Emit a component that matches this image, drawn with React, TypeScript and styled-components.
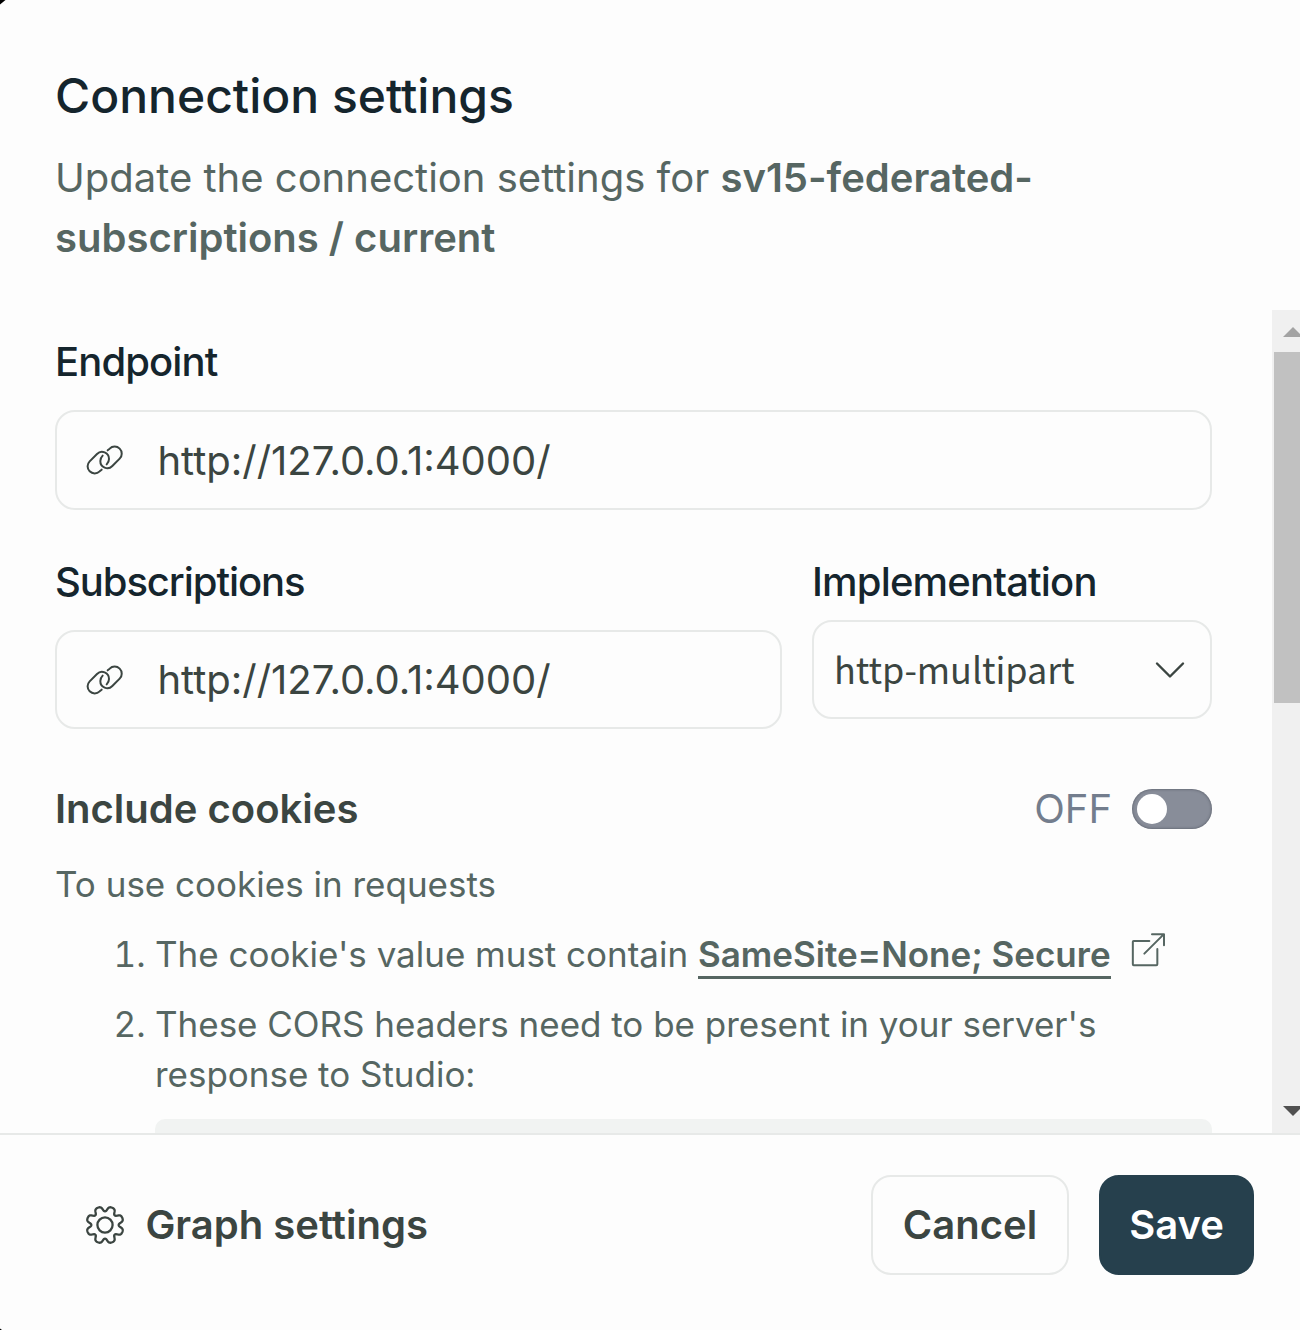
import React from "react";
import styled, { createGlobalStyle } from "styled-components";

const GlobalStyle = createGlobalStyle`
  *, *::before, *::after { box-sizing: border-box; }
  body { margin: 0; background: #000; }
`;

const ink = "#15252d";
const body = "#3b4541";
const muted = "#566662";
const line = "#e7e9e8";

const Dialog = styled.main`
  display: flex;
  flex-direction: column;
  width: 1300px;
  height: 1330px;
  overflow: hidden;
  background: #fdfdfd;
  clip-path: polygon(5.5px 0, 100% 0, 100% 100%, 2px 100%, 0 calc(100% - 1.5px), 0 4.5px);
  font-family: Inter, "Liberation Sans", sans-serif;
  font-size: 40px;
  color: ${body};
`;

const Header = styled.header`
  flex: none;
  height: 310px;
  padding: 66px 55px 0;
`;

const Title = styled.h1`
  margin: 0;
  font-size: 48px;
  font-weight: 500;
  line-height: 60px;
  color: ${ink};
`;

const Subtitle = styled.p`
  margin: 22px 0 0;
  line-height: 60px;
  color: ${muted};
`;

const Strong = styled.strong`
  font-weight: 600;
`;

const Middle = styled.div`
  display: flex;
  flex: none;
  height: 823px;
  overflow: hidden;
`;

const Content = styled.div`
  flex: 1;
  padding: 22px 60px 0 55px;
`;

const Scrollbar = styled.div`
  display: flex;
  flex-direction: column;
  justify-content: space-between;
  width: 28px;
  height: 823px;
  overflow: hidden;
  background: #f0f0f0;
`;

const ScrollTop = styled.div`
  padding-top: 17px;
`;

const ScrollArrow = styled.svg`
  display: block;
  width: 20px;
  height: 10px;
  margin-left: 11px;
`;

const ScrollThumb = styled.div`
  height: 351px;
  margin: 15px 0 0 2px;
  background: #c1c1c1;
`;

const ScrollBottom = styled.div`
  padding-bottom: 17px;
`;

const FieldRow = styled.div`
  display: grid;
  grid-template-columns: 727px 400px;
  gap: 30px;
  margin-top: 42px;
`;

const Label = styled.label<{ $tracking: number }>`
  display: block;
  height: 60px;
  line-height: 60px;
  font-weight: 500;
  letter-spacing: ${(p) => p.$tracking}px;
  color: ${ink};
`;

const InputBox = styled.div<{ $height: number }>`
  display: flex;
  align-items: center;
  gap: 33.4px;
  height: ${(p) => p.$height}px;
  margin-top: 18px;
  padding: 0 28px 0 29px;
  border: 2px solid ${line};
  border-radius: 20px;
`;

const SelectBox = styled.div`
  display: flex;
  align-items: center;
  justify-content: space-between;
  height: 99px;
  margin-top: 8px;
  padding: 0 25px 0 20px;
  border: 2px solid ${line};
  border-radius: 20px;
`;

const SelectValue = styled.span`
  padding-bottom: 4px;
  font-family: "Noto Sans CJK SC", "Noto Sans", sans-serif;
  font-size: 36px;
  line-height: 50px;
  letter-spacing: -0.08px;
`;

const Icon = styled.svg<{ $w: number; $h: number }>`
  flex: none;
  display: block;
  width: ${(p) => p.$w}px;
  height: ${(p) => p.$h}px;
  fill: none;
  stroke: currentColor;
  stroke-linecap: round;
  stroke-linejoin: round;
  overflow: visible;
`;

const CookieRow = styled.div`
  display: flex;
  align-items: center;
  height: 40px;
  margin-top: 60px;
`;

const CookieTitle = styled.h2`
  flex: 1;
  margin: 0;
  padding-bottom: 2px;
  font-size: 40px;
  font-weight: 600;
`;

const ToggleState = styled.span`
  margin-right: 20px;
  padding-bottom: 2px;
  color: #737d8d;
`;

const Toggle = styled.span`
  display: flex;
  align-items: center;
  width: 80px;
  height: 40px;
  padding-left: 5px;
  border-radius: 20px;
  background: #888d99;
  box-shadow: inset 0 0 3px rgba(30, 35, 45, 0.55);
`;

const Knob = styled.span`
  width: 30px;
  height: 30px;
  border-radius: 50%;
  background: #fff;
`;

const Help = styled.div`
  margin-top: 30px;
  font-size: 35px;
  line-height: 50px;
  color: ${muted};
`;

const Steps = styled.ol`
  margin: 20px 0 0;
  padding-left: 100px;
`;

const Step = styled.li`
  margin-bottom: 20px;
`;

const StepLine = styled.div`
  display: flex;
  align-items: flex-start;
  height: 50px;
  white-space: pre;
`;

const StepText = styled.span`
  letter-spacing: -0.02px;
`;

const DocLink = styled.a`
  height: 50px;
  font-weight: 600;
  border-bottom: 3px solid ${muted};
`;

const ExternalSlot = styled.span`
  margin: 4px 0 0 20px;
`;

const CodeBlock = styled.div`
  height: 200px;
  margin-top: 20px;
  border-radius: 10px;
  background: #f1f3f2;
`;

const Footer = styled.footer`
  display: flex;
  flex: 1;
  align-items: flex-start;
  justify-content: space-between;
  padding: 40px 46px 0 85px;
  border-top: 2px solid ${line};
  font-weight: 600;
`;

const GraphLink = styled.div`
  display: flex;
  align-items: center;
  gap: 20.4px;
  height: 100px;
`;

const FooterText = styled.span`
  padding-bottom: 2px;
`;

const Actions = styled.div`
  display: flex;
  gap: 30px;
`;

const Button = styled.button<{ $primary?: boolean }>`
  width: ${(p) => (p.$primary ? 155 : 198)}px;
  height: 100px;
  padding: 0 0 2px;
  border: 2px solid ${(p) => (p.$primary ? "#26404d" : line)};
  border-radius: 20px;
  background: ${(p) => (p.$primary ? "#26404d" : "#fdfdfd")};
  color: ${(p) => (p.$primary ? "#fff" : body)};
  font: inherit;
`;

const LinkIcon = () => (
  <Icon $w={38} $h={30} viewBox="-2 -1 114 90" strokeWidth="6">
    <path d="M45 73L39 78A21 21 0 0 1 9 48L31 26A21 21 0 0 1 67 41C67 47 64 53 60 57" />
    <path d="M63 15L69 10A21 21 0 0 1 99 40L77 62A21 21 0 0 1 41 47C41 41 44 35 48 31" />
  </Icon>
);

const gearPath = (() => {
  const pts: string[] = [];
  for (let i = 0; i < 360; i += 1.5) {
    const a = (i * Math.PI) / 180;
    const r = 16.2 - (2.5 * Math.tanh(1.5 * Math.cos(8 * a))) / Math.tanh(1.5);
    const t = a - 0.04 * Math.sin(8 * a);
    pts.push(`${(r * Math.cos(t)).toFixed(2)} ${(r * Math.sin(t)).toFixed(2)}`);
  }
  return `M${pts.join("L")}Z`;
})();

const GearIcon = () => (
  <Icon $w={40} $h={40} viewBox="-20 -20 40 40" strokeWidth="2.3">
    <circle r="7.6" />
    <path d={gearPath} />
  </Icon>
);

const ExternalIcon = () => (
  <Icon $w={34} $h={34} viewBox="392 489 102 102" strokeWidth="6">
    <path d="M447 513H400Q397.500 513 397.500 515V583Q397.500 586 400 586H468Q471 586 471 583V537" />
    <path d="M432 551L490 493M455 492.500H491V526" />
  </Icon>
);

const ChevronIcon = () => (
  <Icon $w={30} $h={16} viewBox="0 0 30 16" strokeWidth="2.4">
    <path d="M2 1.500L15 14.500L28 1.500" />
  </Icon>
);

const UrlInput = ({ height }: { height: number }) => (
  <InputBox $height={height}>
    <LinkIcon />
    <span>http://127.0.0.1:4000/</span>
  </InputBox>
);

export default function App() {
  return (
    <>
      <GlobalStyle />
      <Dialog>
        <Header>
          <Title>Connection settings</Title>
          <Subtitle>
            Update the connection settings for <Strong>sv15-federated-</Strong>
            <br />
            <Strong>subscriptions / current</Strong>
          </Subtitle>
        </Header>
        <Middle>
          <Content>
            <Label $tracking={-0.9}>Endpoint</Label>
            <UrlInput height={100} />
            <FieldRow>
              <div>
                <Label $tracking={-1.08}>Subscriptions</Label>
                <UrlInput height={99} />
              </div>
              <div>
                <Label $tracking={-0.83}>Implementation</Label>
                <SelectBox>
                  <SelectValue>http-multipart</SelectValue>
                  <ChevronIcon />
                </SelectBox>
              </div>
            </FieldRow>
            <CookieRow>
              <CookieTitle>Include cookies</CookieTitle>
              <ToggleState>OFF</ToggleState>
              <Toggle>
                <Knob />
              </Toggle>
            </CookieRow>
            <Help>
              <div>To use cookies in requests</div>
              <Steps>
                <Step>
                  <StepLine>
                    <StepText>{"The cookie's value must contain "}</StepText>
                    <DocLink>SameSite=None; Secure</DocLink>
                    <ExternalSlot>
                      <ExternalIcon />
                    </ExternalSlot>
                  </StepLine>
                </Step>
                <Step>
                  <StepText>These CORS headers need to be present in your server's response to Studio:</StepText>
                  <CodeBlock />
                </Step>
              </Steps>
            </Help>
          </Content>
          <Scrollbar>
            <ScrollTop>
              <ScrollArrow viewBox="0 0 20 10" fill="#a3a3a3">
                <path d="M0 10L10 0L20 10Z" />
              </ScrollArrow>
              <ScrollThumb />
            </ScrollTop>
            <ScrollBottom>
              <ScrollArrow viewBox="0 0 20 10" fill="#505050">
                <path d="M0 0L10 10L20 0Z" />
              </ScrollArrow>
            </ScrollBottom>
          </Scrollbar>
        </Middle>
        <Footer>
          <GraphLink>
            <GearIcon />
            <FooterText>Graph settings</FooterText>
          </GraphLink>
          <Actions>
            <Button>Cancel</Button>
            <Button $primary>Save</Button>
          </Actions>
        </Footer>
      </Dialog>
    </>
  );
}
